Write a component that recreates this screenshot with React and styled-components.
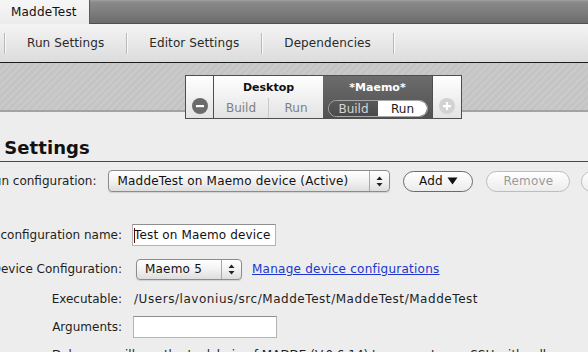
import React from 'react';
import styled, { createGlobalStyle } from 'styled-components';

const GlobalStyle = createGlobalStyle`
  html, body {
    margin: 0;
    padding: 0;
    background: #ededed;
    overflow: hidden;
  }
  body {
    font-family: "DejaVu Sans", "Lucida Grande", sans-serif;
    font-size: 12px;
    color: #1e1e1e;
  }
`;

const Window = styled.div`
  width: 588px;
  height: 352px;
  overflow: hidden;
  background: #ededed;
`;

const TabBar = styled.div`
  display: flex;
  align-items: flex-end;
  height: 24px;
  background: linear-gradient(#a2a2a2 0, #8a8a8a 2px, #7a7a7a 60%, #6c6c6c 100%);
  border-bottom: 1px solid #4f4f4f;
  box-sizing: border-box;
`;

const Tab = styled.div`
  width: 90px;
  height: 24px;
  margin-bottom: -1px;
  box-sizing: border-box;
  padding-left: 11px;
  display: flex;
  align-items: center;
  font-size: 12px;
  letter-spacing: 0.2px;
  color: #111;
  background: linear-gradient(#f6f6f6, #ececec);
  border-right: 1px solid #5a5a5a;
`;

const Toolbar = styled.div`
  display: flex;
  align-items: center;
  height: 39px;
  padding-left: 4px;
  box-sizing: border-box;
  background: linear-gradient(#f4f4f4, #dcdcdc);
  border-bottom: 1px solid #1c1c1c;
`;

const ToolSep = styled.div`
  width: 1px;
  height: 21px;
  background: #b9b9b9;
  box-shadow: 1px 0 0 rgba(255, 255, 255, 0.7);
`;

const ToolItem = styled.div`
  padding: 0 22px;
  font-size: 12px;
  letter-spacing: 0.1px;
  color: #2a2a2a;
  line-height: 38px;
`;

const Band = styled.div`
  height: 56px;
  padding-top: 12px;
  box-sizing: border-box;
  background:
    linear-gradient(to bottom, transparent 0 47px, #a3a3a3 47px 49px, #ededed 49px),
    repeating-linear-gradient(135deg, #c9c9c9 0 3px, #c3c3c3 3px 5px);
`;

const Selector = styled.div`
  display: flex;
  width: 277px;
  height: 44px;
  margin-left: 185px;
  box-sizing: border-box;
  border: 1px solid #4e4e4e;
  background: linear-gradient(#ffffff, #e3e3e3);
`;

const EdgeCell = styled.div`
  width: ${(p) => p.$w}px;
  display: flex;
  flex-direction: column;
  justify-content: flex-end;
  align-items: center;
  padding-bottom: 4px;
  box-sizing: border-box;
  border-${(p) => p.$side}: 1px solid #4e4e4e;
`;

const TargetCell = styled.div`
  width: 109px;
  display: flex;
  flex-direction: column;
  background: ${(p) => (p.$active ? 'linear-gradient(#6c6c6c, #515151)' : 'transparent')};
`;

const TargetTitle = styled.div`
  height: 22px;
  line-height: 24px;
  text-align: center;
  font-size: 11px;
  font-weight: bold;
  color: ${(p) => (p.$active ? '#ffffff' : '#111')};
`;

const StepRow = styled.div`
  flex: 1;
  display: flex;
  align-items: center;
`;

const StepHalf = styled.div`
  flex: 1;
  height: 100%;
  display: flex;
  align-items: center;
  justify-content: center;
  font-size: 12px;
  color: #808080;
  & + & {
    border-left: 1px solid #cacaca;
  }
`;

const Pill = styled.div`
  display: flex;
  width: 100px;
  height: 17px;
  margin: 1px 0 0 5px;
  border: 1px solid #a9a9a9;
  border-radius: 9px;
  overflow: hidden;
  box-sizing: border-box;
`;

const PillPart = styled.div`
  flex: 1;
  display: flex;
  align-items: center;
  justify-content: center;
  font-size: 12px;
  color: ${(p) => (p.$on ? '#1a1a1a' : '#d6d6d6')};
  background: ${(p) => (p.$on ? '#ffffff' : 'linear-gradient(#5a5a5a, #4a4a4a)')};
  border-radius: ${(p) => (p.$on ? '0 9px 9px 0' : '0')};
`;

const Content = styled.div`
  margin-left: -42px;
`;

const Heading = styled.h2`
  margin: 18px -60px 0 0;
  padding-bottom: 2px;
  font-size: 18px;
  line-height: 22px;
  font-weight: bold;
  letter-spacing: 0.1px;
  color: #111;
  border-bottom: 1px solid #4a4a4a;
`;

const TopRow = styled.div`
  display: flex;
  align-items: center;
  height: 22px;
  margin-top: 8px;
  padding-left: 28px;
  white-space: nowrap;
`;

const Label = styled.span`
  font-size: 12px;
  color: #1e1e1e;
`;

const Combo = styled.div`
  display: flex;
  align-items: center;
  width: ${(p) => p.$w}px;
  height: ${(p) => p.$h}px;
  margin-left: ${(p) => p.$ml}px;
  box-sizing: border-box;
  border: 1px solid #8c8c8c;
  border-radius: 4px;
  background: linear-gradient(#ffffff, #f2f2f2 50%, #dedede);
  box-shadow: 0 1px 1px rgba(0, 0, 0, 0.12);
  flex-shrink: 0;
`;

const ComboText = styled.span`
  flex: 1;
  padding-left: 8px;
  font-size: 12px;
  letter-spacing: 0.2px;
  color: #111;
  white-space: nowrap;
`;

const ComboArrows = styled.span`
  width: 19px;
  align-self: stretch;
  display: flex;
  align-items: center;
  justify-content: center;
  border-left: 1px solid #a8a8a8;
`;

const RoundButton = styled.div`
  display: flex;
  align-items: center;
  justify-content: center;
  gap: 4px;
  width: ${(p) => p.$w}px;
  height: 21px;
  margin-left: ${(p) => p.$ml}px;
  box-sizing: border-box;
  border: 1px solid ${(p) => (p.$disabled ? '#bdbdbd' : '#6a6a6a')};
  border-radius: 11px;
  background: linear-gradient(#ffffff, #ececec);
  font-size: 12px;
  letter-spacing: 0.2px;
  color: ${(p) => (p.$disabled ? '#9a9a9a' : '#111')};
  flex-shrink: 0;
`;

const Form = styled.div`
  display: flex;
  flex-direction: column;
`;

const Row = styled.div`
  display: grid;
  grid-template-columns: 164px 1fr;
  column-gap: 10px;
  align-items: center;
  height: 22px;
  margin-top: ${(p) => p.$top}px;
  white-space: nowrap;
`;

const RowLabel = styled.span`
  text-align: right;
  font-size: 12px;
  color: #1e1e1e;
`;

const Cell = styled.div`
  display: flex;
  align-items: center;
  gap: 10px;
`;

const TextInput = styled.div`
  width: 144px;
  height: 22px;
  box-sizing: border-box;
  display: flex;
  align-items: center;
  padding-left: 1px;
  margin-left: ${(p) => p.$ml || 0}px;
  background: #ffffff;
  border: 1px solid #b4b4b4;
  border-top-color: #8e8e8e;
  font-size: 12px;
  letter-spacing: 0.15px;
  color: #111;
`;

const Caret = styled.span`
  display: inline-block;
  width: 1px;
  height: 15px;
  background: #5c0b0b;
  margin-right: -1px;
  position: relative;
  z-index: 1;
`;

const Link = styled.span`
  color: #2035d0;
  text-decoration: underline;
  font-size: 12px;
  letter-spacing: 0.25px;
`;

const PathText = styled.span`
  padding-left: 2px;
  font-size: 12px;
  letter-spacing: 0.55px;
  color: #1e1e1e;
`;

const Note = styled.div`
  margin-top: 9px;
  padding-left: 94px;
  font-size: 12px;
  line-height: 16px;
  white-space: nowrap;
  color: #1e1e1e;
`;

const Minus = () => (
  <svg width="16" height="16" viewBox="0 0 16 16">
    <circle cx="8" cy="8" r="8" fill="#6b6b6b" />
    <rect x="4" y="7" width="8" height="2.2" fill="#fff" />
  </svg>
);

const Plus = () => (
  <svg width="16" height="16" viewBox="0 0 16 16">
    <circle cx="8" cy="8" r="8" fill="#d2d2d2" />
    <rect x="4" y="7" width="8" height="2.2" fill="#fff" />
    <rect x="6.9" y="4" width="2.2" height="8" fill="#fff" />
  </svg>
);

const UpDown = () => (
  <svg width="7" height="11" viewBox="0 0 7 11">
    <path d="M3.5 0.5 L6.5 4 L0.5 4 Z" fill="#222" />
    <path d="M3.5 10.5 L6.5 7 L0.5 7 Z" fill="#222" />
  </svg>
);

const DownTri = () => (
  <svg width="11" height="8" viewBox="0 0 11 8">
    <path d="M0.5 0.5 L10.5 0.5 L5.5 7.5 Z" fill="#111" />
  </svg>
);

const App = () => (
  <Window>
    <GlobalStyle />
    <TabBar>
      <Tab>MaddeTest</Tab>
    </TabBar>
    <Toolbar>
      <ToolSep />
      <ToolItem>Run Settings</ToolItem>
      <ToolSep />
      <ToolItem>Editor Settings</ToolItem>
      <ToolSep />
      <ToolItem>Dependencies</ToolItem>
      <ToolSep />
    </Toolbar>
    <Band>
      <Selector>
        <EdgeCell $w={28} $side="right">
          <Minus />
        </EdgeCell>
        <TargetCell>
          <TargetTitle>Desktop</TargetTitle>
          <StepRow>
            <StepHalf>Build</StepHalf>
            <StepHalf>Run</StepHalf>
          </StepRow>
        </TargetCell>
        <TargetCell $active>
          <TargetTitle $active>*Maemo*</TargetTitle>
          <StepRow>
            <Pill>
              <PillPart>Build</PillPart>
              <PillPart $on>Run</PillPart>
            </Pill>
          </StepRow>
        </TargetCell>
        <EdgeCell $w={29} $side="left">
          <Plus />
        </EdgeCell>
      </Selector>
    </Band>
    <Content>
      <Heading>Run Settings</Heading>
      <TopRow>
        <Label>Run configuration:</Label>
        <Combo $w={282} $h={22} $ml={12}>
          <ComboText>MaddeTest on Maemo device (Active)</ComboText>
          <ComboArrows>
            <UpDown />
          </ComboArrows>
        </Combo>
        <RoundButton $w={70} $ml={13}>
          Add <DownTri />
        </RoundButton>
        <RoundButton $w={84} $ml={13} $disabled>
          Remove
        </RoundButton>
        <RoundButton $w={80} $ml={11} $disabled>
          Rename
        </RoundButton>
      </TopRow>
      <Form>
        <Row $top={32}>
          <RowLabel>Run configuration name:</RowLabel>
          <Cell>
            <TextInput>
              <Caret />
              Test on Maemo device
            </TextInput>
          </Cell>
        </Row>
        <Row $top={12}>
          <RowLabel>Device Configuration:</RowLabel>
          <Cell>
            <Combo $w={106} $h={21} $ml={4}>
              <ComboText>Maemo 5</ComboText>
              <ComboArrows>
                <UpDown />
              </ComboArrows>
            </Combo>
            <Link>Manage device configurations</Link>
          </Cell>
        </Row>
        <Row $top={8}>
          <RowLabel>Executable:</RowLabel>
          <PathText>/Users/lavonius/src/MaddeTest/MaddeTest/MaddeTest</PathText>
        </Row>
        <Row $top={6}>
          <RowLabel>Arguments:</RowLabel>
          <Cell>
            <TextInput $ml={1} />
          </Cell>
        </Row>
        <Note>Debugger will use the toolchain of MADDE (V.0.6.14) to connect over SSH with gdbserver and the device</Note>
      </Form>
    </Content>
  </Window>
);

export default App;
